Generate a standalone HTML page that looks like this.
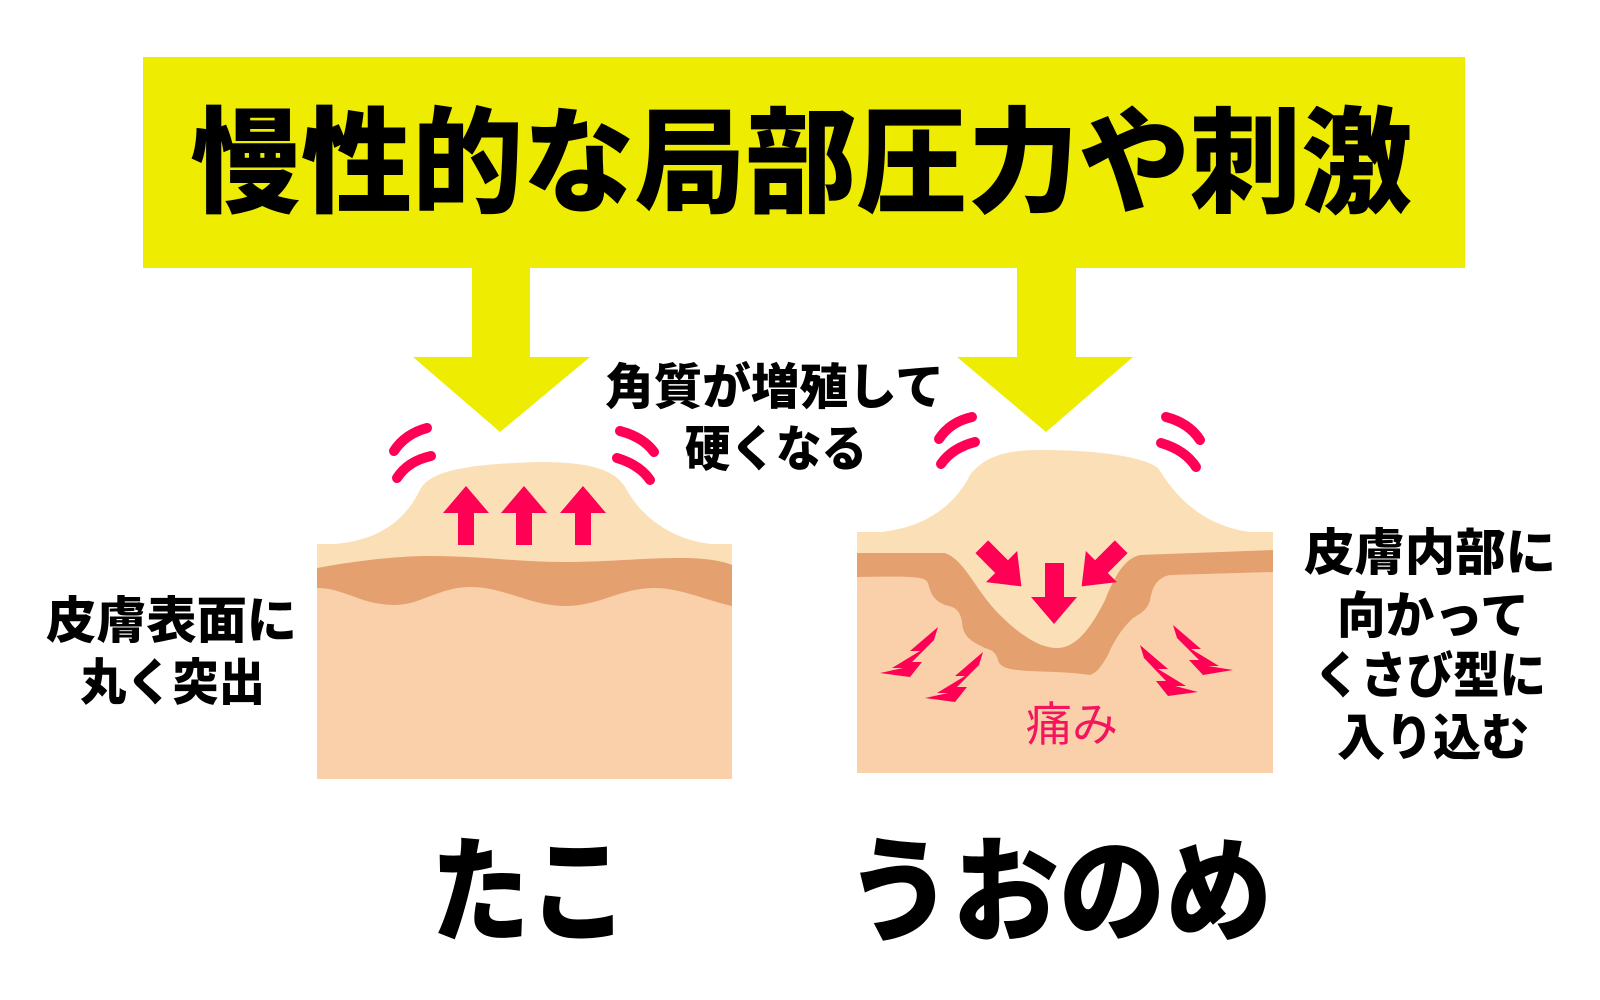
<!DOCTYPE html>
<html><head><meta charset="utf-8"><style>
html,body{margin:0;padding:0;background:#fff;width:1600px;height:1000px;overflow:hidden}
svg{display:block}
text{font-family:"Liberation Sans","Noto Sans CJK JP",sans-serif;font-weight:900;fill:#000}
</style></head><body>
<svg width="1600" height="1000" viewBox="0 0 1600 1000" xmlns="http://www.w3.org/2000/svg">
<rect x="143" y="57" width="1322" height="211" fill="#eeec00"/>
<rect x="472" y="266" width="58" height="92" fill="#eeec00"/>
<polygon points="413,357 590,357 500,432" fill="#eeec00"/>
<rect x="1017" y="266" width="59" height="92" fill="#eeec00"/>
<polygon points="957,357 1133,357 1046,432" fill="#eeec00"/>
<text x="190" y="203" font-size="115" textLength="1222" lengthAdjust="spacingAndGlyphs">慢性的な局部圧力や刺激</text>

<rect x="317" y="544" width="415" height="235" fill="#f9d0a9"/>
<path d="M317,544 L335,544 C380,540 405,520 420,490 C430,470 470,464 540,462 C590,462 615,470 625,487 C640,515 670,540 712,544 L732,544 L732,570 L317,570 Z" fill="#fbdfb7"/>
<path d="M317,568 C360,560 400,556 430,556 C480,556 520,562 560,562 C610,562 640,558 680,558 C710,558 725,562 732,565 L732,606 C705,600 680,588 655,588 C620,588 600,606 565,606 C530,606 505,587 470,587 C440,587 420,605 395,605 C360,605 345,588 317,588 Z" fill="#e4a06f"/>
<g fill="#ff0055">
<polygon points="443,513 466,486 489,513 474,513 474,545 458,545 458,513"/>
<polygon points="501,513 524,486 547,513 532,513 532,545 516,545 516,513"/>
<polygon points="560,513 583,486 606,513 591,513 591,545 575,545 575,513"/>
</g>
<g fill="none" stroke="#ff0055" stroke-width="10" stroke-linecap="round">
<path d="M394,451 Q405,434 427,428"/>
<path d="M397,478 Q408,461 431,456"/>
<path d="M620,431 Q643,437 654,452"/>
<path d="M617,458 Q640,465 650,480"/>
<path d="M939,439 Q950,422 972,417"/>
<path d="M941,464 Q952,448 975,442"/>
<path d="M1166,417 Q1189,423 1200,440"/>
<path d="M1161,443 Q1185,450 1196,467"/>
</g>

<rect x="857" y="532" width="416" height="241" fill="#f9d0a9"/>
<path d="M857,532 L880,532 C925,528 955,505 970,475 C985,455 1010,450 1040,450 C1090,450 1140,455 1158,468 C1175,495 1200,525 1250,532 L1273,532 L1273,560 L857,560 Z" fill="#fbdfb7"/>
<path d="M857,553 L945,553 C965,560 975,590 1000,615 C1020,635 1040,648 1057,648 C1075,648 1090,630 1105,600 C1115,575 1125,558 1140,555 L1273,550 L1273,572 L1170,575 C1155,578 1152,590 1150,600 C1148,610 1138,615 1133,618 C1120,630 1112,645 1108,655 C1102,665 1098,672 1090,675 C1070,672 1050,672 1030,671 C1010,670 1000,668 998,660 C995,650 990,650 985,648 C968,640 963,635 962,622 C960,610 955,607 945,605 C932,600 930,590 928,583 C925,577 918,576 857,577 Z" fill="#e4a06f"/>
<path d="M945,553 C965,560 975,590 1000,615 C1020,635 1040,648 1057,648 C1075,648 1090,630 1105,600 C1115,575 1125,558 1140,555 Z" fill="#fbdfb7"/>
<g fill="#ff0055">
<polygon points="1045,563 1064,563 1064,597 1077,597 1054,624 1031,597 1045,597"/>
<g transform="translate(1003,568) rotate(-45)"><polygon points="-9,-30 9,-30 9,-2 22,-2 0,26 -22,-2 -9,-2"/></g>
<g transform="translate(1100,568) rotate(45)"><polygon points="-9,-30 9,-30 9,-2 22,-2 0,26 -22,-2 -9,-2"/></g>
<polygon points="938,627 910,651 920,651 892,668 903,668 880,673 910,677 922,662 912,662 934,640"/>
<polygon points="983,652 955,676 965,676 937,693 948,693 925,698 955,702 967,687 957,687 979,665"/>
<polygon points="1173,625 1201,649 1191,649 1219,666 1208,666 1233,670 1203,675 1189,660 1199,660 1177,638"/>
<polygon points="1140,645 1168,669 1158,669 1186,686 1175,686 1198,692 1168,696 1156,681 1166,681 1144,658"/>
</g>
<text x="1026" y="741" font-size="47" textLength="92" lengthAdjust="spacingAndGlyphs" style="font-weight:400;fill:#f5145e">痛み</text>

<text x="605" y="404" font-size="49" textLength="339" lengthAdjust="spacingAndGlyphs">角質が増殖して</text>
<text x="685" y="466" font-size="49" textLength="182" lengthAdjust="spacingAndGlyphs">硬くなる</text>
<text x="46" y="638" font-size="50" textLength="251" lengthAdjust="spacingAndGlyphs">皮膚表面に</text>
<text x="80" y="700" font-size="50" textLength="185" lengthAdjust="spacingAndGlyphs">丸く突出</text>
<text x="1304" y="570" font-size="50" textLength="252" lengthAdjust="spacingAndGlyphs">皮膚内部に</text>
<text x="1337" y="633" font-size="50" textLength="192" lengthAdjust="spacingAndGlyphs">向かって</text>
<text x="1314" y="693" font-size="50" textLength="232" lengthAdjust="spacingAndGlyphs">くさび型に</text>
<text x="1337" y="755" font-size="50" textLength="192" lengthAdjust="spacingAndGlyphs">入り込む</text>
<text x="431" y="932" font-size="115" textLength="197" lengthAdjust="spacingAndGlyphs">たこ</text>
<text x="846" y="932" font-size="115" textLength="426" lengthAdjust="spacingAndGlyphs">うおのめ</text>
</svg>
</body></html>
